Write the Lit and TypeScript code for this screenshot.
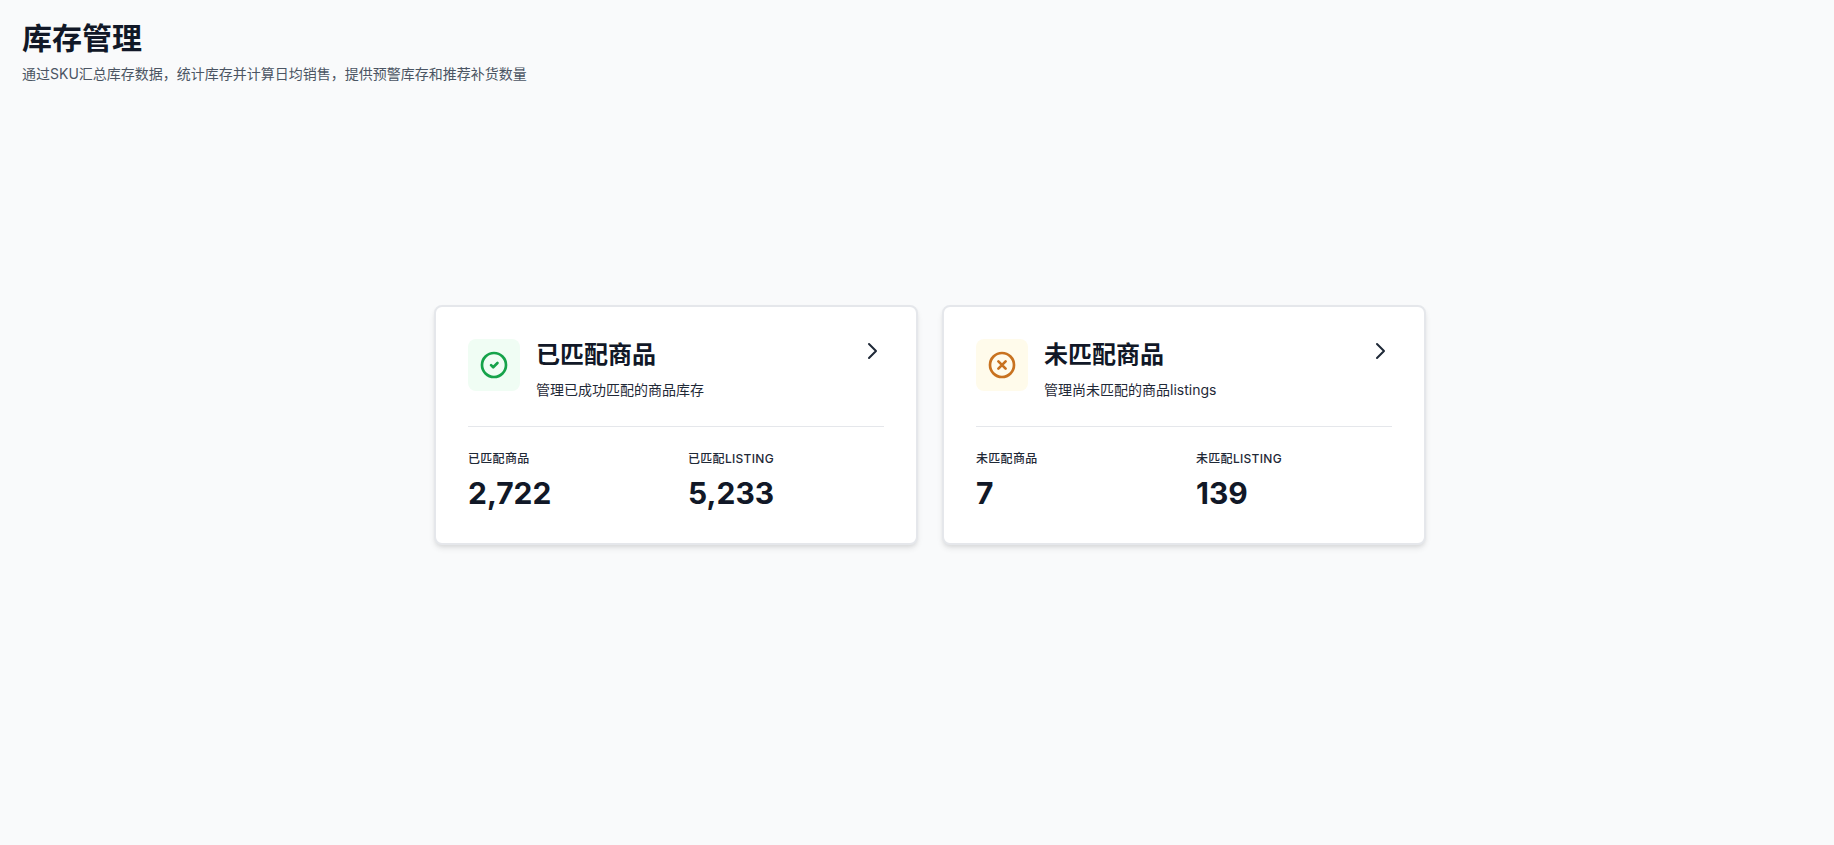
import { LitElement, html, css, svg } from "lit";
import { customElement } from "lit/decorators.js";

const cards = [
  {
    tone: "ok",
    title: "已匹配商品",
    desc: "管理已成功匹配的商品库存",
    stats: [
      { label: "已匹配商品", value: "2,722" },
      { label: "已匹配Listing", value: "5,233" },
    ],
    mark: svg`<path d="M9.8 12.1l1.6 1.6 3.2-3.2" />`,
  },
  {
    tone: "warn",
    title: "未匹配商品",
    desc: "管理尚未匹配的商品listings",
    stats: [
      { label: "未匹配商品", value: "7" },
      { label: "未匹配Listing", value: "139" },
    ],
    mark: svg`<path d="M9.3 9.3l5.4 5.4m0-5.4l-5.4 5.4" />`,
  },
];

@customElement("app-root")
export class AppRoot extends LitElement {
  static styles = css`
    :host {
      display: block;
      min-height: 845px;
      box-sizing: border-box;
      padding: 20px 22px 0;
      background: #f9fafb;
      color: #111827;
      font-family: Inter, "Noto Sans CJK SC", sans-serif;
    }

    h1 {
      margin: 0;
      font-size: 30px;
      line-height: 36px;
      font-weight: 700;
    }

    .sub {
      margin: 8px 0 0;
      font-size: 14px;
      line-height: 20px;
      color: #4b5563;
    }

    .cards {
      display: grid;
      grid-template-columns: 484px 484px;
      gap: 24px;
      margin: 221px 0 0 412px;
    }

    .card {
      box-sizing: border-box;
      padding: 32px;
      background: #fff;
      border: 2px solid #e5e7eb;
      border-radius: 8px;
      box-shadow: 0 4px 6px -1px rgba(0, 0, 0, 0.1),
        0 2px 4px -1px rgba(0, 0, 0, 0.06);
    }

    .head {
      display: flex;
      align-items: flex-start;
      padding-bottom: 26px;
      border-bottom: 1px solid #e5e7eb;
    }

    .icon {
      flex: none;
      width: 52px;
      height: 52px;
      margin-right: 16px;
      border-radius: 8px;
      display: flex;
      align-items: center;
      justify-content: center;
    }

    .icon svg {
      width: 32px;
      height: 32px;
      fill: none;
      stroke: currentColor;
      stroke-width: 2;
      stroke-linecap: round;
      stroke-linejoin: round;
    }

    .ok .icon {
      background: #f0fdf4;
      color: #16a34a;
    }

    .warn .icon {
      background: #fffbeb;
      color: #c8721f;
    }

    .text {
      flex: 1;
    }

    h2 {
      margin: 0;
      font-size: 24px;
      line-height: 32px;
      font-weight: 600;
    }

    .desc {
      margin: 9px 0 0;
      font-size: 14px;
      line-height: 20px;
      color: #1f2937;
    }

    .chevron {
      flex: none;
      width: 24px;
      height: 24px;
      fill: none;
      stroke: #1f2937;
      stroke-width: 2;
      stroke-linecap: round;
      stroke-linejoin: round;
    }

    .stats {
      display: grid;
      grid-template-columns: 1fr 1fr;
      gap: 24px;
      padding-top: 24px;
    }

    .label {
      font-size: 12px;
      line-height: 16px;
      font-weight: 500;
      letter-spacing: 0.025em;
      text-transform: uppercase;
      color: #1f2937;
    }

    .value {
      margin-top: 8px;
      font-size: 30px;
      line-height: 36px;
      font-weight: 700;
    }
  `;

  render() {
    return html`
      <h1>库存管理</h1>
      <p class="sub">通过SKU汇总库存数据，统计库存并计算日均销售，提供预警库存和推荐补货数量</p>
      <div class="cards">
        ${cards.map(
          (c) => html`
            <div class="card ${c.tone}">
              <div class="head">
                <div class="icon">
                  <svg viewBox="0 0 24 24">
                    <circle cx="12" cy="12" r="9" />
                    ${c.mark}
                  </svg>
                </div>
                <div class="text">
                  <h2>${c.title}</h2>
                  <p class="desc">${c.desc}</p>
                </div>
                <svg class="chevron" viewBox="0 0 24 24">
                  <path d="M9 5l7 7-7 7" />
                </svg>
              </div>
              <div class="stats">
                ${c.stats.map(
                  (s) => html`
                    <div>
                      <div class="label">${s.label}</div>
                      <div class="value">${s.value}</div>
                    </div>
                  `
                )}
              </div>
            </div>
          `
        )}
      </div>
    `;
  }
}
